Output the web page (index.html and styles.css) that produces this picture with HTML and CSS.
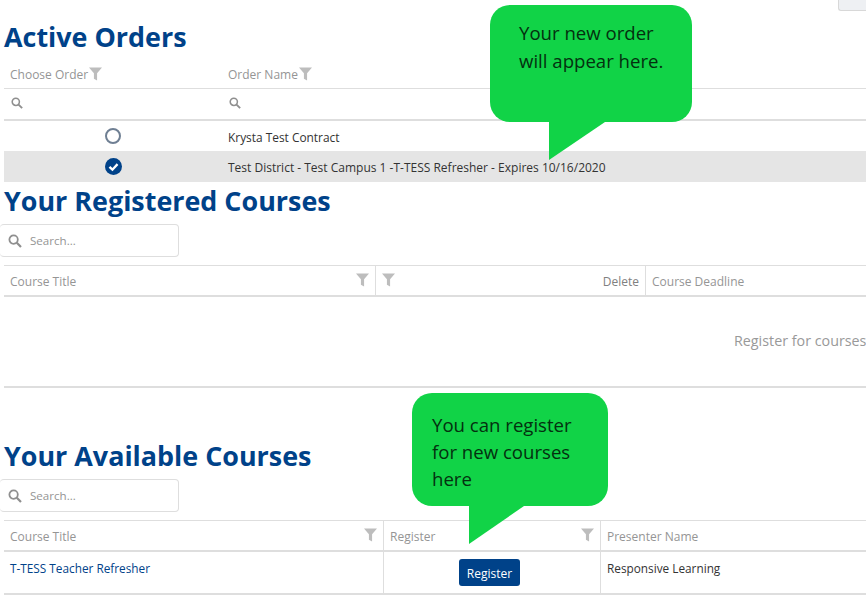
FILE: index.html
```html
<!DOCTYPE html>
<html lang="en">
<head>
    <meta charset="UTF-8">
    <title>Orders and Courses</title>
    <link rel="stylesheet" href="styles.css">
</head>
<body>
    <svg class="icon-defs" width="0" height="0">
        <symbol id="i-filter" viewBox="0 0 14 14"><path d="M0 0H14L8.7 6.2V14L5.3 12V6.2Z"/></symbol>
        <symbol id="i-search" viewBox="0 0 14 14"><circle cx="5.6" cy="5.6" r="4.2" fill="none" stroke="currentColor" stroke-width="1.8"/><path d="M8.8 8.8L13 13" fill="none" stroke="currentColor" stroke-width="2.2"/></symbol>
    </svg>

    <div class="top-bar"><div class="top-button"></div></div>

    <h1 class="section-title title-active">Active Orders</h1>
    <div class="grid orders">
        <div class="head-cell no-line">Choose Order<svg class="filter inline"><use href="#i-filter"/></svg></div>
        <div class="head-cell no-line">Order Name<svg class="filter inline"><use href="#i-filter"/></svg></div>
        <div class="search-cell"><svg class="search-small"><use href="#i-search"/></svg></div>
        <div class="search-cell"><svg class="search-small"><use href="#i-search"/></svg></div>
        <div class="order-row">
            <div class="radio-cell"><span class="radio"></span></div>
            <div class="order-name contract">Krysta Test Contract</div>
        </div>
        <div class="order-row selected">
            <div class="radio-cell">
                <svg class="radio-on" viewBox="0 0 16 16"><circle cx="8" cy="8" r="8"/><path d="M4.2 8.3L7 11L11.8 5.8" fill="none" stroke="#fff" stroke-width="2.2"/></svg>
            </div>
            <div class="order-name">Test District - Test Campus 1 -T-TESS Refresher - Expires 10/16/2020</div>
        </div>
    </div>

    <h2 class="section-title title-registered">Your Registered Courses</h2>
    <div class="search-box"><svg class="search-big"><use href="#i-search"/></svg><span>Search...</span></div>
    <div class="grid registered">
        <div class="head-cell split">Course Title<svg class="filter"><use href="#i-filter"/></svg></div>
        <div class="head-cell split delete-head"><svg class="filter"><use href="#i-filter"/></svg><span>Delete</span></div>
        <div class="head-cell">Course Deadline</div>
        <div class="empty-row"><span>Register for courses</span></div>
    </div>

    <h2 class="section-title title-available">Your Available Courses</h2>
    <div class="search-box"><svg class="search-big"><use href="#i-search"/></svg><span>Search...</span></div>
    <div class="grid available">
        <div class="head-cell split">Course Title<svg class="filter"><use href="#i-filter"/></svg></div>
        <div class="head-cell split">Register<svg class="filter"><use href="#i-filter"/></svg></div>
        <div class="head-cell">Presenter Name</div>
        <div class="body-cell split course-link">T-TESS Teacher Refresher</div>
        <div class="body-cell split button-cell"><button class="register-btn">Register</button></div>
        <div class="body-cell">Responsive Learning</div>
    </div>

    <div class="callout callout-order">Your new order<br>will appear here.</div>
    <div class="callout callout-register">You can register<br>for new courses<br>here</div>
</body>
</html>
```
FILE: styles.css
```css
:root {
    --navy: #004289; --line: #dedede; --head-text: #959595; --green: #11d347;
    --filter: #bdbdbd;
}
html, body { height: 100%; }
body { margin: 0; overflow: hidden; background: #fff; color: #333; font-family: "Open Sans", "Liberation Sans", sans-serif; font-size: 12px; position: relative; }
.icon-defs { position: absolute; }
.top-bar { height: 11px; display: flex; justify-content: flex-end; }
.top-button { width: 28px; height: 11px; background: #eef0f3; border: 1px solid #d8d8d8; border-top: 0; border-right: 0; border-radius: 0 0 0 3px; box-sizing: border-box; }

.section-title { margin: 0 0 0 4px; color: var(--navy); font-size: 26.9px; font-weight: 700; line-height: 38px; }
.title-active { margin-top: 7px; }
.title-registered { margin-top: 0; }
.title-available { margin-top: 49px; }

.grid { display: grid; margin-left: 4px; width: 1000px; font-size: 12px; }
.orders { grid-template-columns: 218px 1fr; margin-top: 3px; }
.registered { grid-template-columns: 372px 270px 1fr; border-top: 1px solid var(--line); border-bottom: 2px solid var(--line); margin-top: 8px; }
.available { grid-template-columns: 380px 217px 1fr; border-top: 1px solid var(--line); border-bottom: 2px solid var(--line); margin-top: 8px; }

.head-cell { display: flex; align-items: center; justify-content: space-between; height: 27px; padding: 2px 6px 0; color: var(--head-text); border-bottom: 2px solid var(--line); }
.head-cell.no-line { border-bottom: 1px solid var(--line); justify-content: flex-start; height: 30px; padding-top: 2px; box-sizing: border-box; }
.split { border-right: 1px solid var(--line); }
.filter { width: 13px; height: 14px; margin-top: -3px; fill: var(--filter); flex: none; }
.filter.inline { margin-left: 1px; margin-top: -2px; }
.delete-head span { color: #808080; }

.search-cell { height: 32px; padding: 0 7px 2px; display: flex; align-items: center; border-bottom: 2px solid var(--line); box-sizing: border-box; }
.search-small { width: 12px; height: 12px; color: #8f8f8f; }

.order-row { grid-column: 1 / -1; display: grid; grid-template-columns: 218px 1fr; align-items: center; height: 30px; }
.order-row.selected { background: #e5e5e5; height: 31px; }
.radio-cell { display: flex; justify-content: center; }
.radio { width: 16px; height: 16px; border: 2px solid #6f7f93; border-radius: 50%; box-sizing: border-box; background: #fff; }
.radio-on { width: 17px; height: 17px; fill: var(--navy); }
.order-name { padding: 1px 0 0 6px; color: #333; }
.contract { font-size: 11.9px; }

.search-box { width: 179px; height: 33px; border: 1px solid var(--line); border-left: 0; border-radius: 4px; box-sizing: border-box; display: flex; align-items: center; padding-left: 8px; gap: 8px; color: #959595; margin-top: 4px; font-size: 11.6px; }
.search-big { width: 14px; height: 14px; color: #8f8f8f; }

.empty-row { grid-column: 1 / -1; height: 89px; display: flex; align-items: center; padding: 0 0 3px 730px; box-sizing: border-box; color: #999; font-size: 14.3px; white-space: nowrap; }
.body-cell { height: 41px; padding: 8px 6px 0; box-sizing: border-box; color: #333; font-size: 11.8px; }
.course-link { color: var(--navy); }
.button-cell { display: flex; justify-content: center; padding-top: 7px; }
.register-btn { width: 61px; height: 27px; margin-right: 5px; padding-top: 2px; background: var(--navy); color: #fff; border: 0; border-radius: 3px; font: 12px "Open Sans", "Liberation Sans", sans-serif; }

.callout { position: absolute; background: var(--green); border-radius: 20px; color: #04300f; font-size: 18.6px; box-sizing: border-box; }
.callout::after { content: ""; position: absolute; top: 100%; background: var(--green); clip-path: polygon(0 0, 100% 0, 0 100%); }
.callout-order { left: 490px; top: 5px; width: 202px; height: 117px; padding: 14px 0 0 29px; line-height: 28px; }
.callout-order::after { left: 59px; width: 56px; height: 38px; }
.callout-register { left: 412px; top: 393px; width: 196px; height: 113px; padding: 18px 0 0 20px; line-height: 27px; }
.callout-register::after { left: 57px; width: 55px; height: 38px; }
```
